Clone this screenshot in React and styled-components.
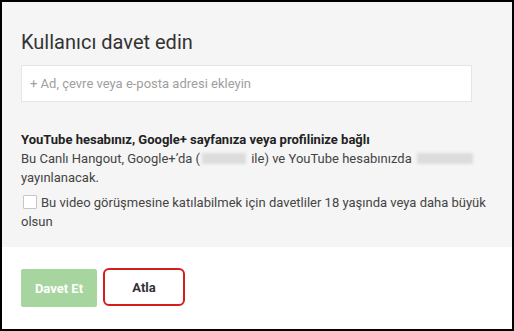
import styled, { createGlobalStyle } from "styled-components";

const GlobalStyle = createGlobalStyle`
  html, body {
    margin: 0;
    padding: 0;
    background: #000;
  }
  body {
    font-family: Roboto, "Liberation Sans", Arial, sans-serif;
  }
`;

const Frame = styled.div`
  width: 510px;
  height: 327px;
  margin: 2px;
  background: #fff;
  display: flex;
  flex-direction: column;
`;

const Body = styled.div`
  background: #f5f5f5;
  height: 245px;
  padding: 28px 0 0 19px;
  box-sizing: border-box;
`;

const Title = styled.h1`
  margin: 0;
  font-size: 20px;
  font-weight: 400;
  color: #333;
  line-height: 24px;
`;

const Input = styled.input`
  display: block;
  margin-top: 11px;
  width: 451px;
  height: 37px;
  box-sizing: border-box;
  border: 1px solid #e5e5e5;
  background: #fff;
  padding: 0 8px;
  font-family: inherit;
  font-size: 13px;
  outline: none;
  &::placeholder {
    color: #a0a0a0;
  }
`;

const Info = styled.div`
  margin-top: 28px;
  font-size: 13px;
  line-height: 19px;
  color: #444;
`;

const Strong = styled.div`
  font-weight: 700;
  color: #222;
`;

const Hidden = styled.span`
  display: inline-block;
  width: ${(p) => p.w}px;
  height: 11px;
  vertical-align: -1px;
  background: #dcdcdc;
  filter: blur(1.5px);
  margin: 0 2px;
`;

const Check = styled.label`
  display: block;
  margin-top: 6px;
  font-size: 13px;
  line-height: 19px;
  color: #444;
  width: 480px;
`;

const Box = styled.span`
  display: inline-block;
  width: 12px;
  height: 12px;
  margin: 0 4px 0 2px;
  vertical-align: -2px;
  border: 1px solid #c6c6c6;
  background: #fff;
  border-radius: 1px;
`;

const Footer = styled.div`
  display: flex;
  gap: 6px;
  padding: 21px 0 0 19px;
`;

const Button = styled.button`
  height: 38px;
  box-sizing: border-box;
  font-family: inherit;
  font-size: 13px;
  font-weight: 700;
  cursor: pointer;
  border-radius: ${(p) => (p.primary ? "2px" : "6px")};
  border: ${(p) => (p.primary ? "none" : "2px solid #d41d1d")};
  background: ${(p) => (p.primary ? "#a7d59f" : "#fff")};
  color: ${(p) => (p.primary ? "#fff" : "#333")};
  width: ${(p) => (p.primary ? "76px" : "82px")};
  margin-top: ${(p) => (p.primary ? "1px" : "0")};
`;

export default function App() {
  return (
    <>
      <GlobalStyle />
      <Frame>
        <Body>
          <Title>Kullanıcı davet edin</Title>
          <Input placeholder="+ Ad, çevre veya e-posta adresi ekleyin" />
          <Info>
            <Strong>YouTube hesabınız, Google+ sayfanıza veya profilinize bağlı</Strong>
            Bu Canlı Hangout, Google+’da (<Hidden w={44} /> ile) ve YouTube hesabınızda{" "}
            <Hidden w={56} />
            <br />
            yayınlanacak.
          </Info>
          <Check>
            <Box />
            Bu video görüşmesine katılabilmek için davetliler 18 yaşında veya daha büyük olsun
          </Check>
        </Body>
        <Footer>
          <Button primary>Davet Et</Button>
          <Button>Atla</Button>
        </Footer>
      </Frame>
    </>
  );
}
